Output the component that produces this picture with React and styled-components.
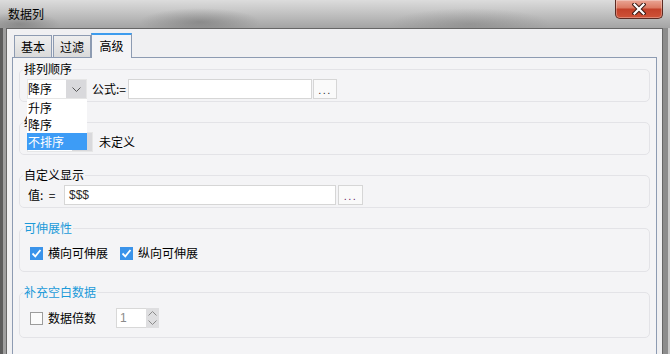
import React from "react";
import styled, { createGlobalStyle } from "styled-components";

const GlobalStyle = createGlobalStyle`
  html, body { margin: 0; padding: 0; background: #7a7a7a; }
  body {
    font-family: "Noto Sans CJK SC", "Noto Sans", sans-serif;
    font-size: 12px;
    color: #000;
  }
  * { box-sizing: border-box; }
`;

const Window = styled.div`
  width: 670px;
  height: 354px;
  overflow: hidden;
  display: flex;
  flex-direction: column;
  background:
    linear-gradient(90deg,
      #5c5c5c 0 3px,
      #9e9e9e 3px 6px,
      transparent 6px calc(100% - 7px),
      #8c8c8c calc(100% - 7px) calc(100% - 2px),
      #c9c9c9 calc(100% - 2px)),
    linear-gradient(#b0b0b0, #8a8a8a);
`;

const TitleBar = styled.div`
  height: 28px;
  flex: none;
  display: flex;
  align-items: flex-start;
  padding-left: 8px;
  background:
    radial-gradient(ellipse 60px 14px at 200px 22px, rgba(70,70,70,0.35), transparent),
    radial-gradient(ellipse 80px 16px at 470px 24px, rgba(80,80,80,0.25), transparent),
    radial-gradient(ellipse 40px 12px at 20px 24px, rgba(60,60,60,0.3), transparent),
    linear-gradient(#dcdcdc 0%, #c6c6c6 40%, #a4a4a4 100%);
`;

const TitleText = styled.div`
  padding-top: 6px;
  font-size: 12px;
  line-height: 16px;
  color: #000;
`;

const CloseButton = styled.div`
  margin-left: auto;
  margin-right: 7px;
  width: 48px;
  height: 19px;
  display: flex;
  align-items: center;
  justify-content: center;
  border: 1px solid #5b2a22;
  border-top: none;
  border-radius: 0 0 5px 5px;
  background: linear-gradient(#eaa595 0%, #dc7b64 42%, #c3412a 52%, #cf5338 100%);
  box-shadow: inset 0 0 0 1px rgba(255, 255, 255, 0.3);
`;

const Client = styled.div`
  flex: 1;
  min-height: 0;
  overflow: hidden;
  margin: 0 7px 0 6px;
  border: 1px solid #666;
  border-bottom: none;
  background: #f0f0f2;
  padding: 4px 5px 0 5px;
  display: flex;
  flex-direction: column;
`;

const TabRow = styled.div`
  display: flex;
  align-items: flex-end;
  height: 24px;
  padding-left: 2px;
  position: relative;
  z-index: 1;
  flex: none;
`;

const Tab = styled.div`
  width: ${(p) => p.$w}px;
  margin-left: ${(p) => p.$ml || 0}px;
  text-align: center;
  border: 1px solid #8d9bb2;
  border-bottom: none;
  ${(p) =>
    p.$active
      ? `
    height: 25px;
    margin-bottom: -1px;
    border-top: 2px solid #3d9cee;
    background: #f4f4f6;
    line-height: 21px;
  `
      : `
    height: 22px;
    background: linear-gradient(#eeeeee, #dadada);
    line-height: 22px;
  `}
`;

const Panel = styled.div`
  flex: none;
  height: 320px;
  border: 1px solid #8d9bb2;
  background: #f4f4f6;
  padding: 3px 6px 0 6px;
  display: flex;
  flex-direction: column;
  gap: 12px;
`;

const GroupBox = styled.fieldset`
  margin: 0;
  padding: 0;
  min-width: 0;
  border: 1px solid #e3e3e7;
  border-radius: 5px;
`;

const Legend = styled.legend`
  margin-left: 3px;
  padding: 0 1px;
  font-size: 12px;
  line-height: 16px;
  color: ${(p) => p.$color || "#000"};
`;

const Row = styled.div`
  display: flex;
  align-items: center;
  padding: ${(p) => p.$pt}px 0 ${(p) => p.$pb}px ${(p) => p.$pl}px;
`;

const Combo = styled.div`
  position: relative;
  width: ${(p) => p.$w}px;
  height: 20px;
  display: flex;
  background: #fff;
  border: 1px solid #e6e6e6;
`;

const ComboText = styled.div`
  flex: 1;
  padding-left: 0;
  line-height: 18px;
`;

const ComboArrow = styled.div`
  width: 20px;
  background: #d9d9dc;
  display: flex;
  align-items: center;
  justify-content: center;
`;

const DropList = styled.div`
  position: absolute;
  top: 100%;
  left: -1px;
  width: 60px;
  z-index: 10;
  background: #fff;
  border-top: 1px solid #e6e6e6;
`;

const DropItem = styled.div`
  height: 17px;
  line-height: 17px;
  padding-left: 1px;
  background: ${(p) => (p.$sel ? "#3d9cf6" : "#fff")};
  color: ${(p) => (p.$sel ? "#fff" : "#000")};
`;

const Label = styled.div`
  width: ${(p) => (p.$w ? `${p.$w}px` : "auto")};
  margin-left: ${(p) => p.$ml || 0}px;
  line-height: 18px;
  white-space: nowrap;
  flex: none;
`;

const TextInput = styled.div`
  width: ${(p) => p.$w}px;
  height: 20px;
  border: 1px solid #d6d6d6;
  background: #fff;
  padding-left: 4px;
  font-family: "Liberation Sans", Arial, sans-serif;
  font-size: 12px;
  line-height: 18px;
  color: #2a2a2a;
  flex: none;
`;

const DotsButton = styled.div`
  width: ${(p) => p.$w}px;
  height: 20px;
  margin-left: ${(p) => p.$ml}px;
  border: 1px solid #d6d6d6;
  background: #fafafa;
  display: flex;
  align-items: flex-end;
  justify-content: center;
  padding-bottom: 2px;
  font-family: "Liberation Sans", Arial, sans-serif;
  font-size: 11px;
  line-height: 11px;
  letter-spacing: 1.5px;
  color: ${(p) => p.$color || "#333"};
  flex: none;
`;

const CheckItem = styled.label`
  display: flex;
  align-items: center;
  gap: 5px;
  margin-right: ${(p) => p.$mr || 0}px;
  line-height: 18px;
`;

const Box = styled.span`
  width: 13px;
  height: 13px;
  display: flex;
  align-items: center;
  justify-content: center;
  flex: none;
  ${(p) =>
    p.$checked
      ? `background: #3a93ea;`
      : `background: #fbfbfb; border: 1px solid #9c9c9c;`}
`;

const Spinner = styled.div`
  display: flex;
  height: 20px;
  margin-left: ${(p) => p.$ml}px;
`;

const SpinInput = styled.div`
  width: 30px;
  height: 20px;
  border: 1px solid #d8d8d8;
  border-right: none;
  background: #fff;
  padding-left: 3px;
  font-family: "Liberation Sans", Arial, sans-serif;
  font-size: 12px;
  line-height: 18px;
  color: #8a8a8a;
`;

const SpinArrows = styled.div`
  width: 13px;
  height: 20px;
  background: #dedee0;
  display: flex;
  flex-direction: column;
  align-items: center;
  justify-content: space-around;
  padding: 1px 0;
`;

const ChevronDown = ({ w = 9, h = 5, color = "#555" }) => (
  <svg width={w} height={h} viewBox="0 0 9 5">
    <path d="M0.5 0.5 L4.5 4.5 L8.5 0.5" fill="none" stroke={color} strokeWidth="1" />
  </svg>
);

const ChevronUp = ({ color = "#8a8a8a" }) => (
  <svg width="9" height="5" viewBox="0 0 9 5">
    <path d="M0.5 4.5 L4.5 0.5 L8.5 4.5" fill="none" stroke={color} strokeWidth="1" />
  </svg>
);

const Check = () => (
  <svg width="11" height="11" viewBox="0 0 11 11">
    <path d="M1.5 5.5 L4.3 8.3 L9.5 2" fill="none" stroke="#fff" strokeWidth="1.8" />
  </svg>
);

const CloseX = () => (
  <svg width="14" height="12" viewBox="0 0 14 12">
    <path d="M2.5 1.5 L11.5 10.5 M11.5 1.5 L2.5 10.5" stroke="#3b1a14" strokeWidth="4.2" strokeLinecap="square" />
    <path d="M2.5 1.5 L11.5 10.5 M11.5 1.5 L2.5 10.5" stroke="#fff" strokeWidth="2.2" strokeLinecap="square" />
  </svg>
);

export default function App() {
  return (
    <>
      <GlobalStyle />
      <Window>
        <TitleBar>
          <TitleText>数据列</TitleText>
          <CloseButton>
            <CloseX />
          </CloseButton>
        </TitleBar>
        <Client>
          <TabRow>
            <Tab $w={38}>基本</Tab>
            <Tab $w={38} $ml={1}>过滤</Tab>
            <Tab $w={41} $active>高级</Tab>
          </TabRow>
          <Panel>
            <GroupBox>
              <Legend>排列顺序</Legend>
              <Row $pt={2} $pb={2} $pl={7}>
                <Combo $w={60}>
                  <ComboText>降序</ComboText>
                  <ComboArrow>
                    <ChevronDown />
                  </ComboArrow>
                  <DropList>
                    <DropItem>升序</DropItem>
                    <DropItem>降序</DropItem>
                    <DropItem $sel>不排序</DropItem>
                  </DropList>
                </Combo>
                <Label $w={36} $ml={5}>公式:=</Label>
                <TextInput $w={184} />
                <DotsButton $w={24} $ml={1}>...</DotsButton>
              </Row>
            </GroupBox>

            <GroupBox>
              <Legend>结果集筛选</Legend>
              <Row $pt={2} $pb={2} $pl={7}>
                <Combo $w={66}>
                  <ComboText />
                  <ComboArrow>
                    <ChevronDown />
                  </ComboArrow>
                </Combo>
                <Label $ml={6}>未定义</Label>
              </Row>
            </GroupBox>

            <GroupBox>
              <Legend>自定义显示</Legend>
              <Row $pt={2} $pb={2} $pl={8}>
                <Label $w={36}>值:&nbsp;&nbsp;=</Label>
                <TextInput $w={272}>$$$</TextInput>
                <DotsButton $w={25} $ml={2} $color="#6a2a6a">...</DotsButton>
              </Row>
            </GroupBox>

            <GroupBox>
              <Legend $color="#1b9ad9">可伸展性</Legend>
              <Row $pt={8} $pb={9} $pl={10}>
                <CheckItem $mr={12}>
                  <Box $checked>
                    <Check />
                  </Box>
                  横向可伸展
                </CheckItem>
                <CheckItem>
                  <Box $checked>
                    <Check />
                  </Box>
                  纵向可伸展
                </CheckItem>
              </Row>
            </GroupBox>

            <GroupBox>
              <Legend $color="#1b9ad9">补充空白数据</Legend>
              <Row $pt={8} $pb={9} $pl={10}>
                <CheckItem>
                  <Box />
                  数据倍数
                </CheckItem>
                <Spinner $ml={20}>
                  <SpinInput>1</SpinInput>
                  <SpinArrows>
                    <ChevronUp />
                    <ChevronDown color="#8a8a8a" />
                  </SpinArrows>
                </Spinner>
              </Row>
            </GroupBox>
          </Panel>
        </Client>
      </Window>
    </>
  );
}
